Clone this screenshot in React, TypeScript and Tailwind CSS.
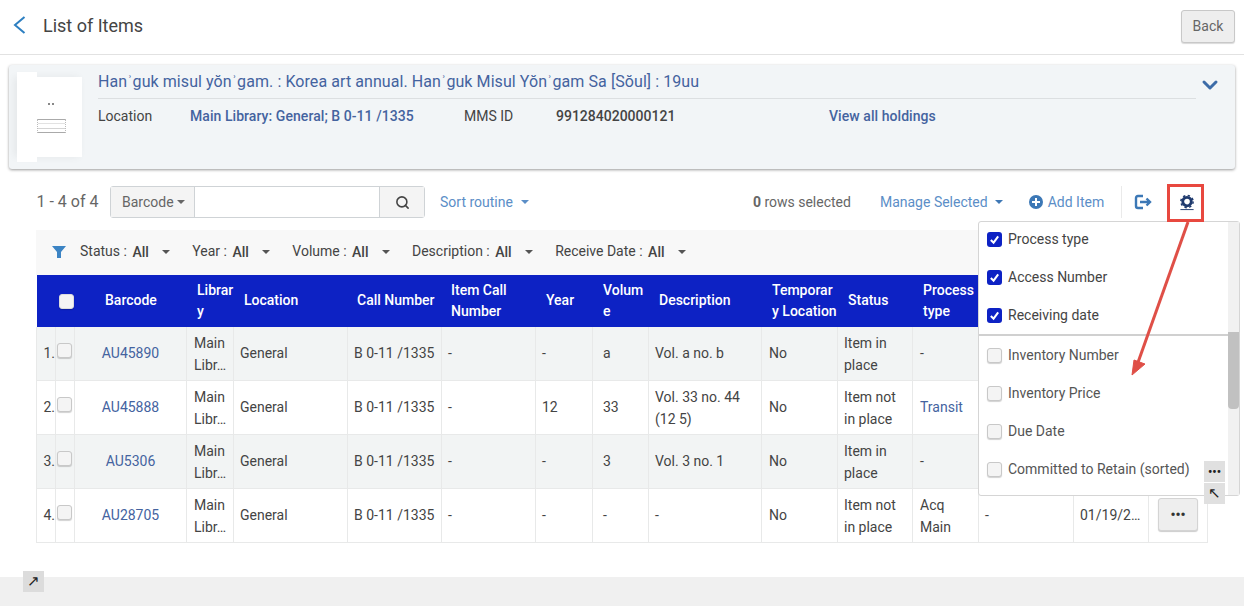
import { ChevronDown, Search } from "lucide-react";

const columns = [
  { label: "", w: "w-[18px]", pad: "" },
  { label: "", w: "w-[19px]", pad: "" },
  { label: "Barcode", w: "w-[112px]", pad: "pb-[2px] pl-[31px]" },
  { label: "Librar y", w: "w-[47px]", pad: "pl-[11px]" },
  { label: "Location", w: "w-[114px]", pad: "pb-[2px] pl-[11px]" },
  { label: "Call Number", w: "w-[94px]", pad: "pb-[2px] pl-[10px]" },
  { label: "Item Call Number", w: "w-[94px]", pad: "pl-[10px]" },
  { label: "Year", w: "w-[57px]", pad: "pb-[2px] pl-[11px]" },
  { label: "Volum e", w: "w-[56px]", pad: "pl-[11px]" },
  { label: "Description", w: "w-[113px]", pad: "pb-[2px] pl-[11px]" },
  { label: "Temporar y Location", w: "w-[76px]", pad: "pl-[11px]" },
  { label: "Status", w: "w-[75px]", pad: "pb-[2px] pl-[11px]" },
  { label: "Process type", w: "w-[66px]", pad: "pl-[11px]" },
  { label: "", w: "w-[95px]", pad: "" },
  { label: "", w: "w-[75px]", pad: "" },
  { label: "", w: "w-[59px]", pad: "" },
];

const rows = [
  { n: "1.", code: "AU45890", call: "B 0-11 /1335", year: "-", vol: "a", desc: "Vol. a no. b", status: "Item in place", proc: "-", link: false },
  { n: "2.", code: "AU45888", call: "B 0-11 /1335", year: "12", vol: "33", desc: "Vol. 33 no. 44 (12 5)", status: "Item not in place", proc: "Transit", link: true },
  { n: "3.", code: "AU5306", call: "B 0-11 /1335", year: "-", vol: "3", desc: "Vol. 3 no. 1", status: "Item in place", proc: "-", link: false },
  { n: "4.", code: "AU28705", call: "B 0-11 /1335", year: "-", vol: "-", desc: "-", status: "Item not in place", proc: "Acq Main", link: false },
];

const filters = ["Status", "Year", "Volume", "Description", "Receive Date"];

const checked = ["Process type", "Access Number", "Receiving date"];
const unchecked = ["Inventory Number", "Inventory Price", "Due Date", "Committed to Retain (sorted)"];

function Caret({ className = "" }: { className?: string }) {
  return <span className={`inline-block h-0 w-0 border-x-[4px] border-t-[4px] border-x-transparent ${className}`} />;
}

function Box({ className = "" }: { className?: string }) {
  return <span className={`block h-[15px] w-[15px] rounded-[3px] border border-[#c8c8c8] bg-[#f4f4f4] shadow-[0_1px_1px_rgba(0,0,0,0.18)] ${className}`} />;
}

function Cell({ w, children, className = "", tall = false }: { w: string; children?: React.ReactNode; className?: string; tall?: boolean }) {
  return (
    <div className={`${w} flex shrink-0 items-center border-r border-[#e8e9e9] leading-[22px] ${tall ? "" : "pb-[2px]"} ${className}`}>{children}</div>
  );
}

function ColumnPopup() {
  return (
    <div className="absolute left-[978px] top-[221px] z-10 flex h-[275px] w-[262px] rounded-[3px] border border-[#d5d5d5] bg-white">
      <div className="w-[249px] overflow-hidden pl-[8px]">
        <div className="-mt-[2px]">
          {checked.map((label) => (
            <div key={label} className="flex h-[38px] items-center gap-[6px] text-[14px] text-[#444]">
              <span className="flex h-[15px] w-[15px] items-center justify-center rounded-[3px] bg-[#0d22c4]">
                <svg viewBox="0 0 12 12" className="h-[11px] w-[11px]" fill="none" stroke="white" strokeWidth="2.2">
                  <path d="M2 6.5 L5 9.5 L10 2.5" />
                </svg>
              </span>
              {label}
            </div>
          ))}
          <div className="-ml-[8px] h-[2px] bg-[#d0d0d0]" />
          {unchecked.map((label) => (
            <div key={label} className="flex h-[38px] items-center gap-[6px] text-[14px] text-[#555]">
              <Box />
              {label}
            </div>
          ))}
        </div>
      </div>
      <div className="relative w-[11px] bg-[#f1f1f1]">
        <div className="absolute left-0 top-[110px] h-[77px] w-[11px] rounded-b-[4px] bg-[#c1c1c1]" />
      </div>
    </div>
  );
}

function Annotations() {
  return (
    <svg className="pointer-events-none absolute left-0 top-0 z-20 h-[606px] w-[1244px]" viewBox="0 0 1244 606" fill="none">
      <rect x="1168.5" y="185.5" width="34" height="35" stroke="#e8483f" strokeWidth="3" />
      <path d="M1188 222 L1136 368" stroke="#df4f47" strokeWidth="3" />
      <path d="M1132 375 L1134 360 L1145 364 Z" fill="#df4f47" stroke="#df4f47" />
    </svg>
  );
}

export default function App() {
  return (
    <div className="relative h-[606px] w-[1244px] overflow-hidden bg-white font-['Roboto',sans-serif] text-[14px] text-[#444]">
      <header className="flex h-[55px] items-center border-b border-[#e2e2e2] pl-[13px] pr-[9px]">
        <svg viewBox="0 0 13 18" className="-mt-[4px] h-[18px] w-[13px]" fill="none" stroke="#2d7fc1" strokeWidth="2">
          <path d="M11.5 1 L2 9 L11.5 17" />
        </svg>
        <h1 className="-mt-[3px] ml-[17px] text-[18px] text-[#444]">List of Items</h1>
        <button className="-mt-[2px] ml-auto h-[33px] w-[54px] rounded-[3px] border border-[#c8c8c8] bg-[#eeeeee] text-[14px] text-[#666] shadow-[0_1px_1px_rgba(0,0,0,0.15)]">
          Back
        </button>
      </header>

      <section className="mx-[9px] mt-[10px] flex h-[104px] rounded-[3px] bg-[#f2f5f7] shadow-[0_1px_3px_rgba(0,0,0,0.4)]">
        <div className="relative ml-[8px] mt-[12px] h-[80px] w-[65px] shrink-0 bg-white shadow-[-3px_0_8px_rgba(0,0,0,0.06)]">
          <div className="absolute -top-[5px] left-0 h-[90px] w-[20px] bg-white" />
          <div className="absolute left-[31px] top-[26px] h-[2px] w-[6px] border-x-2 border-[#888]" />
          <div className="absolute left-[20px] top-[42px] flex h-[14px] w-[29px] flex-col justify-between border-x border-dotted border-[#bbb]">
            <span className="h-px bg-[#aaa]" />
            <span className="h-px bg-[#e2e2e2]" />
            <span className="h-px bg-[#d4d4d4]" />
            <span className="h-px bg-[#aaa]" />
          </div>
        </div>
        <div className="ml-[16px] flex-1 pt-[6px]">
          <div className="flex h-[28px] items-start justify-between border-b border-[#dcdfe1]">
            <a className="text-[16px] leading-[22px] tracking-[0.075px] text-[#44639f]">Hanʾguk misul yŏnʾgam. : Korea art annual. Hanʾguk Misul Yŏnʾgam Sa [Sŏul] : 19uu</a>
          </div>
          <div className="flex h-[34px] items-center">
            <span className="w-[92px]">Location</span>
            <span className="w-[274px] font-medium tracking-[0.06px] text-[#44639f]">Main Library: General; B 0-11 /1335</span>
            <span className="w-[92px]">MMS ID</span>
            <span className="w-[274px] font-medium">991284020000121</span>
            <span className="-ml-px font-medium tracking-[0.06px] text-[#44639f]">View all holdings</span>
          </div>
        </div>
        <ChevronDown className="ml-[2px] mr-[13px] mt-[8px] h-[24px] w-[24px] shrink-0 text-[#3d6ca8]" strokeWidth={3} />
      </section>

      <div className="mt-[17px] flex h-[32px] items-center pl-[36.5px]">
        <span className="w-[73.5px] text-[16px] text-[#666]">1 - 4 of 4</span>
        <div className="flex h-[32px] w-[315px] rounded-[3px] border border-[#cfd3d6]">
          <span className="flex w-[84px] items-center gap-[3px] border-r border-[#cfd3d6] bg-[#f4f4f4] pl-[11px] text-[#666]">
            Barcode <Caret className="border-t-[#666]" />
          </span>
          <span className="flex-1" />
          <span className="flex w-[45px] items-center justify-center border-l border-[#cfd3d6] bg-[#f4f4f4]">
            <Search className="h-[15px] w-[15px] text-[#444]" strokeWidth={2.5} />
          </span>
        </div>
        <span className="ml-[15px] flex items-center gap-[8px] text-[#5b8ec7]">
          Sort routine <Caret className="border-t-[#5b8ec7]" />
        </span>
        <span className="ml-[224px] text-[#666]">
          <b className="font-bold">0</b> rows selected
        </span>
        <span className="ml-[29px] flex items-center gap-[7px] text-[#5b8ec7]">
          Manage Selected <Caret className="border-t-[#3f78b5]" />
        </span>
        <span className="ml-[26px] flex items-center gap-[5px] text-[#5b8ec7]">
          <svg viewBox="0 0 14 14" className="h-[14px] w-[14px]">
            <circle cx="7" cy="7" r="7" fill="#3c78b6" />
            <path d="M7 3 V11 M3 7 H11" stroke="white" strokeWidth="2" />
          </svg>
          Add Item
        </span>
        <span className="ml-[17px] h-[32px] w-px bg-[#eaeaea]" />
        <svg viewBox="0 0 18 16" className="ml-[12px] h-[16px] w-[18px]" fill="none" stroke="#3c78b6" strokeWidth="2.4">
          <path d="M9 2 H4 Q2 2 2 4 V12 Q2 14 4 14 H9" />
          <path d="M6 8 H16 M12.5 4.5 L16 8 L12.5 11.5" />
        </svg>
        <svg viewBox="0 0 16 18" className="ml-[27px] h-[17px] w-[16px]">
          <circle cx="8" cy="8" r="4.5" fill="none" stroke="#1f3a6e" strokeWidth="3" />
          <circle cx="8" cy="8" r="6.5" fill="none" stroke="#1f3a6e" strokeWidth="1.6" strokeDasharray="2.5 2.6" />
          <path d="M1 16.5 H15" stroke="#1f3a6e" strokeWidth="1" />
        </svg>
      </div>

      <main className="ml-[36px] mt-[12px] w-[1172px]">
        <div className="flex h-[45px] items-center bg-[#f8f8f8] pb-[2px] pl-[16px]">
          <svg viewBox="0 0 14 12" className="h-[12px] w-[14px]">
            <path d="M0 0 H14 L9 6 V12 H5 V6 Z" fill="#3c84c4" />
          </svg>
          <div className="ml-[14px] flex items-center gap-[22.5px]">
            {filters.map((f) => (
              <span key={f} className="flex items-center">
                {f} :&nbsp;<b className="ml-[2px] mt-[1px] font-medium">All</b>
                <Caret className="ml-[13px] border-t-[#555]" />
              </span>
            ))}
          </div>
        </div>

        <div className="ml-px flex h-[52px] bg-[#0d22c4] text-white">
          {columns.map((c, i) => (
            <div key={i} className={`${c.w} ${c.pad} flex shrink-0 items-center font-medium leading-[21px]`}>
              {i === 1 ? <Box className="ml-[4px] border-[#ddd] bg-[#f4f4f4]" /> : c.label}
            </div>
          ))}
        </div>

        {rows.map((r, i) => (
          <div key={r.code} className={`flex h-[54px] border-b border-[#e8e9e9] ${i % 2 === 0 ? "bg-[#f2f4f4]" : "bg-white"}`}>
            <Cell w="w-[20px]" className="justify-end border-l">{r.n}</Cell>
            <Cell w="w-[19px]" tall><Box className="-mt-[6px] ml-[1px]" /></Cell>
            <Cell w="w-[112px]" className="justify-center text-[#44639f]">{r.code}</Cell>
            <Cell w="w-[47px]" className="pl-[7px]" tall><span>Main<br />Libr…</span></Cell>
            <Cell w="w-[114px]" className="pl-[6px]">General</Cell>
            <Cell w="w-[94px]" className="pl-[6px]">{r.call}</Cell>
            <Cell w="w-[94px]" className="pl-[6px]">-</Cell>
            <Cell w="w-[57px]" className="pl-[6px]">{r.year}</Cell>
            <Cell w="w-[56px]" className="pl-[10px]">{r.vol}</Cell>
            <Cell w="w-[113px]" className="pl-[6px]" tall={i === 1}>{r.desc}</Cell>
            <Cell w="w-[76px]" className="pl-[7px]">No</Cell>
            <Cell w="w-[75px]" className="pl-[6px] pr-[10px]" tall>{r.status}</Cell>
            <Cell w="w-[66px]" className={`pl-[7px] ${r.link ? "text-[#44639f]" : ""}`} tall={i === 3}>{r.proc}</Cell>
            <Cell w="w-[95px]" className="pl-[6px]">{i === 3 ? "-" : ""}</Cell>
            <Cell w="w-[75px]" className="pl-[6px]">{i === 3 ? "01/19/2…" : ""}</Cell>
            <Cell w="w-[59px]" className="justify-center">
              {i === 3 && (
                <button className="flex h-[33px] w-[40px] items-center justify-center rounded-[3px] border border-[#d4d4d4] bg-[#eeeeee] font-bold leading-none text-[#333] shadow-[0_1px_1px_rgba(0,0,0,0.2)]">
                  •••
                </button>
              )}
            </Cell>
          </div>
        ))}
      </main>

      <ColumnPopup />
      <Annotations />

      <div className="absolute left-[1204px] top-[461px] z-20 flex h-[21px] w-[21px] items-center justify-center bg-[#e0e0e0] text-[12px] font-bold leading-none text-[#222]">•••</div>
      <div className="absolute left-[1204px] top-[483px] z-20 flex h-[21px] w-[21px] items-center justify-center bg-[#e0e0e0] text-[15px] leading-none text-[#222]">↖</div>

      <footer className="absolute bottom-0 left-0 h-[29px] w-full bg-[#f0f0f0]" />
      <div className="absolute left-[23px] top-[571px] flex h-[21px] w-[21px] items-center justify-center bg-[#dcdcdc] text-[15px] leading-none text-[#222]">↗</div>
    </div>
  );
}
